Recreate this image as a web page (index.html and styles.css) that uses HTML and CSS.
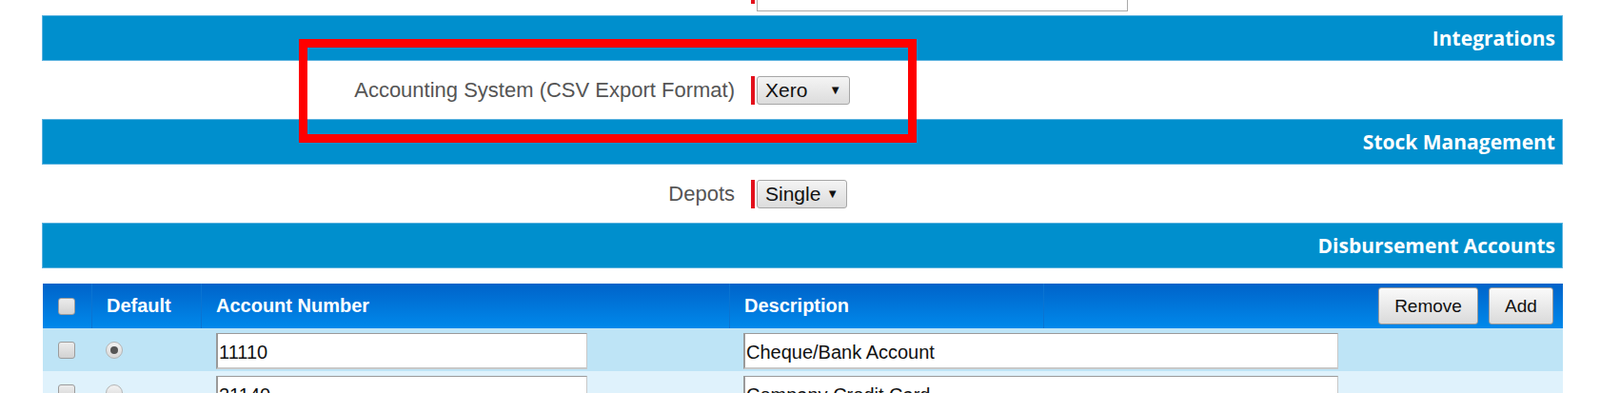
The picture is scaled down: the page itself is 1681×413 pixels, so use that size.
FILE: index.html
```html
<!DOCTYPE html>
<html lang="en">
<head>
  <meta charset="UTF-8" />
  <title>Settings</title>
  <link rel="stylesheet" href="styles.css">
</head>
<body>
  <div class="page">
    <div class="form-row top-row">
      <label class="field-label"></label>
      <span class="required"></span>
      <input type="text" class="text-field" value="" />
    </div>

    <div class="section-bar">Integrations</div>
    <div class="form-row">
      <label class="field-label">Accounting System (CSV Export Format)</label>
      <span class="required"></span>
      <span class="select select-xero">Xero<span class="caret">&#9660;</span></span>
    </div>

    <div class="section-bar">Stock Management</div>
    <div class="form-row">
      <label class="field-label">Depots</label>
      <span class="required"></span>
      <span class="select select-single">Single<span class="caret">&#9660;</span></span>
    </div>

    <div class="section-bar">Disbursement Accounts</div>

    <div class="grid">
      <div class="grid-head">
        <div class="cell cell-check"><span class="checkbox"></span></div>
        <div class="cell">Default</div>
        <div class="cell">Account Number</div>
        <div class="cell">Description</div>
        <div class="cell cell-actions">
          <button class="btn btn-remove">Remove</button>
          <button class="btn btn-add">Add</button>
        </div>
      </div>
      <div class="grid-row row-odd">
        <div class="cell cell-check"><span class="checkbox"></span></div>
        <div class="cell cell-radio"><span class="radio checked"></span></div>
        <div class="cell cell-input"><input type="text" class="grid-input num-input" value="11110" /></div>
        <div class="cell cell-input cell-desc"><input type="text" class="grid-input desc-input" value="Cheque/Bank Account" /></div>
      </div>
      <div class="grid-row row-even">
        <div class="cell cell-check"><span class="checkbox"></span></div>
        <div class="cell cell-radio"><span class="radio"></span></div>
        <div class="cell cell-input"><input type="text" class="grid-input num-input" value="21140" /></div>
        <div class="cell cell-input cell-desc"><input type="text" class="grid-input desc-input" value="Company Credit Card" /></div>
      </div>
    </div>

    <div class="highlight"></div>
  </div>
</body>
</html>
```

FILE: styles.css
```css
body {
  margin: 0;
  background: #fff;
  font-family: 'Liberation Sans', Arial, sans-serif;
}
.page {
  position: relative;
  margin-left: 44px;
  width: 1598px;
}

/* form rows */
.form-row {
  display: flex;
  align-items: center;
  height: 61px;
}
.top-row {
  height: 16px;
  align-items: flex-start;
  overflow: hidden;
}
.top-row .required,
.top-row .text-field {
  margin-top: -26px;
}
.field-label {
  width: 728px;
  margin-right: 17px;
  text-align: right;
  font-size: 22px;
  color: #555;
}
.required {
  width: 4px;
  height: 30px;
  background: #e3101c;
  margin-right: 2px;
}
.text-field {
  box-sizing: border-box;
  width: 390px;
  height: 38px;
  border: 1px solid #aaa;
  padding: 0 4px;
}
.select {
  box-sizing: border-box;
  display: flex;
  align-items: center;
  height: 30px;
  padding: 0 8px;
  border: 1px solid #a6a6a6;
  border-radius: 3px;
  background: linear-gradient(to bottom, #f4f4f4, #dcdcdc);
  font-size: 21px;
  color: #111;
}
.select-xero {
  width: 98px;
}
.select-single {
  width: 95px;
}
.caret {
  margin-left: auto;
  font-size: 13px;
  color: #111;
}

/* section headers */
.section-bar {
  box-sizing: border-box;
  height: 48px;
  line-height: 46px;
  padding-right: 7px;
  text-align: right;
  background: #008fcd;
  border: 1px solid #5ab2df;
  color: #fff;
  font-family: 'Open Sans', sans-serif;
  font-weight: bold;
  font-size: 21px;
}

/* accounts grid */
.grid {
  margin-top: 16px;
  margin-left: 1px;
}
.grid-head,
.grid-row {
  display: grid;
  grid-template-columns: 51px 115px 555px 330px 1fr;
}
.grid-head {
  height: 47px;
  background: linear-gradient(to bottom, #0063c9, #0089eb);
  color: #fff;
  font-weight: bold;
  font-size: 20px;
}
.grid-head .cell {
  display: flex;
  align-items: center;
  padding-left: 15px;
  border-left: 1px solid #0a74d2;
}
.grid-head .cell:first-child {
  border-left: none;
}
.grid-head .cell-check {
  padding-left: 16px;
}
.grid-head .cell-actions {
  justify-content: flex-end;
  gap: 11px;
  padding-right: 10px;
}
.grid-row {
  height: 45px;
}
.row-odd {
  background: #bee4f6;
}
.row-even {
  background: #dff2fc;
}
.grid-row .cell {
  display: flex;
  align-items: center;
}
.grid-row .cell-check {
  padding-left: 16px;
}
.cell-radio {
  padding-left: 15px;
}
.cell-input {
  padding-left: 16px;
  padding-top: 2px;
}
.cell-desc {
  grid-column: 4 / span 2;
  padding-left: 15px;
}
.grid-input {
  box-sizing: border-box;
  height: 38px;
  border-style: solid;
  border-width: 1px 1px 2px 2px;
  border-color: #9a9a9a #c8c8c8 #c8c8c8 #9a9a9a;
  padding: 4px 3px 0 1px;
  background: #fff;
  font-family: 'Liberation Sans', Arial, sans-serif;
  font-size: 20px;
  color: #111;
}
.num-input {
  width: 390px;
}
.desc-input {
  width: 625px;
}

.checkbox {
  box-sizing: border-box;
  width: 18px;
  height: 18px;
  border: 1px solid #9c9c9c;
  border-radius: 3px;
  background: linear-gradient(to bottom, #ececec, #d2d2d2);
}
.radio {
  box-sizing: border-box;
  width: 18px;
  height: 18px;
  border: 1px solid #b4b4b4;
  border-radius: 50%;
  background: linear-gradient(to bottom, #f2f2f2, #d8d8d8);
  display: flex;
  align-items: center;
  justify-content: center;
}
.radio.checked::after {
  content: "";
  width: 8px;
  height: 8px;
  border-radius: 50%;
  background: #555;
}

.btn {
  box-sizing: border-box;
  height: 39px;
  padding: 0 16px;
  border: 1px solid #9a9a9a;
  border-radius: 3px;
  background: linear-gradient(to bottom, #fafafa, #dadada);
  font-family: 'Liberation Sans', Arial, sans-serif;
  font-size: 19px;
  color: #111;
}
.btn-remove {
  width: 105px;
}
.btn-add {
  width: 68px;
}

/* red annotation box */
.highlight {
  position: absolute;
  left: 270px;
  top: 41px;
  width: 649px;
  height: 109px;
  box-sizing: border-box;
  border: 9px solid #ff0000;
}
```
